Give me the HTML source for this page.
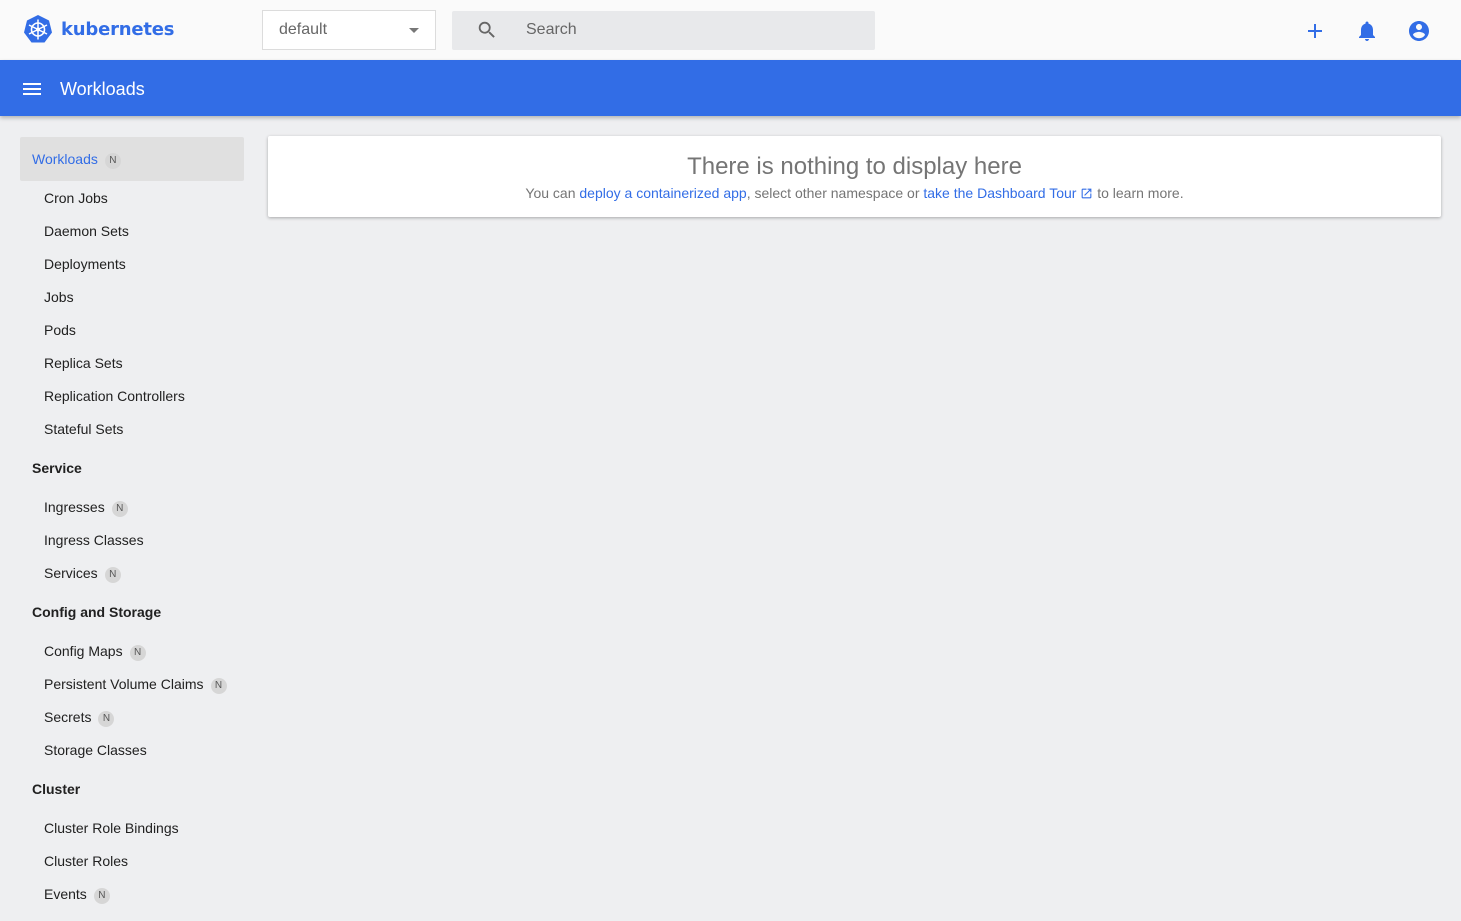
<!DOCTYPE html><html><head><style>
body{margin:0;width:1461px;height:921px;overflow:hidden;background:#eeeff1;font-family:"Liberation Sans",sans-serif;position:relative}
.a{position:absolute}
.top{left:0;top:0;width:1461px;height:60px;background:#fafafa}
.blue{left:0;top:60px;width:1461px;height:56px;background:#326de6;box-shadow:0 2px 4px rgba(0,0,0,.25)}
.it{position:absolute;left:44px;font-size:14px;color:#212121;line-height:20px}
.hd{position:absolute;left:32px;font-size:14px;font-weight:bold;color:#212121;line-height:20px}
.n{display:inline-block;width:16px;height:16px;border-radius:8px;background:#d6d6d6;color:#555;font-size:10px;text-align:center;line-height:16px;margin-left:7px;vertical-align:1px}
a{color:#326de6;text-decoration:none}
</style></head><body>
<div class="a top"></div>
<svg class="a" style="left:23px;top:14px" width="30" height="31" viewBox="0 0 30 31"><polygon points="15,1 26,6.5 29,18.5 21.5,28.5 8.5,28.5 1,18.5 4,6.5" fill="#326de6"/><circle cx="15" cy="15.5" r="6.5" fill="none" stroke="#fff" stroke-width="1.6"/><g stroke="#fff" stroke-width="1.5"><line x1="15" y1="5.5" x2="15" y2="25.5"/><line x1="6" y1="11" x2="24" y2="20"/><line x1="6" y1="20" x2="24" y2="11"/></g><circle cx="15" cy="15.5" r="2" fill="#fff"/></svg>
<div class="a" style="left:61px;top:19px;font-weight:bold;color:#326de6;font-family:'DejaVu Sans',sans-serif;font-size:18px;letter-spacing:-0.2px">kubernetes</div>
<div class="a" style="left:262px;top:10px;width:172px;height:38px;border:1px solid #dcdcdc;background:#fff"></div>
<div class="a" style="left:279px;top:21px;font-size:16px;color:#666">default</div>
<div class="a" style="left:409px;top:28px;width:0;height:0;border-left:5px solid transparent;border-right:5px solid transparent;border-top:5px solid #777"></div>
<div class="a" style="left:452px;top:11px;width:423px;height:39px;background:#e8e9eb;border-radius:2px"></div>
<svg class="a" style="left:476px;top:19px" width="22" height="22" viewBox="0 0 24 24"><path fill="#666" d="M15.5 14h-.79l-.28-.27A6.470 6.470 0 0016 9.5 6.5 6.5 0 109.5 16c1.61 0 3.09-.59 4.230-1.57l.27.28v.79l5 4.99L20.49 19l-4.99-5zm-6 0C7.01 14 5 11.99 5 9.5S7.01 5 9.5 5 14 7.01 14 9.5 11.99 14 9.5 14z"/></svg>
<div class="a" style="left:526px;top:21px;font-size:16px;color:#666">Search</div>
<svg class="a" style="left:1303px;top:19px" width="24" height="24" viewBox="0 0 24 24"><path fill="#326de6" d="M19 13h-6v6h-2v-6H5v-2h6V5h2v6h6v2z"/></svg>
<svg class="a" style="left:1355px;top:19px" width="24" height="24" viewBox="0 0 24 24"><path fill="#326de6" d="M12 22c1.1 0 2-.9 2-2h-4c0 1.1.89 2 2 2zm6-6v-5c0-3.07-1.64-5.640-4.5-6.32V4c0-.83-.67-1.5-1.5-1.5s-1.5.67-1.5 1.5v.68C7.63 5.36 6 7.92 6 11v5l-2 2v1h16v-1l-2-2z"/></svg>
<svg class="a" style="left:1407px;top:19px" width="24" height="24" viewBox="0 0 24 24"><path fill="#326de6" d="M12 2C6.48 2 2 6.48 2 12s4.48 10 10 10 10-4.48 10-10S17.52 2 12 2zm0 3c1.66 0 3 1.34 3 3s-1.34 3-3 3-3-1.34-3-3 1.34-3 3-3zm0 14.2a7.2 7.2 0 01-6-3.22c.03-1.99 4-3.080 6-3.08 1.99 0 5.97 1.09 6 3.08a7.2 7.2 0 01-6 3.22z"/></svg>
<div class="a blue"></div>
<svg class="a" style="left:20px;top:77px" width="24" height="24" viewBox="0 0 24 24"><path fill="#fff" d="M3 18h18v-2H3v2zm0-5h18v-2H3v2zm0-7v2h18V6H3z"/></svg>
<div class="a" style="left:60px;top:79px;font-size:18px;color:#fff">Workloads</div>
<div class="a" style="left:20px;top:137px;width:224px;height:44px;background:#e0e0e0;border-radius:2px"></div>
<div class="hd" style="top:149px;color:#326de6;font-weight:normal">Workloads<span class="n">N</span></div>
<div class="it" style="top:188px">Cron Jobs</div>
<div class="it" style="top:221px">Daemon Sets</div>
<div class="it" style="top:254px">Deployments</div>
<div class="it" style="top:287px">Jobs</div>
<div class="it" style="top:320px">Pods</div>
<div class="it" style="top:353px">Replica Sets</div>
<div class="it" style="top:386px">Replication Controllers</div>
<div class="it" style="top:419px">Stateful Sets</div>
<div class="hd" style="top:458px">Service</div>
<div class="it" style="top:497px">Ingresses<span class="n">N</span></div>
<div class="it" style="top:530px">Ingress Classes</div>
<div class="it" style="top:563px">Services<span class="n">N</span></div>
<div class="hd" style="top:602px">Config and Storage</div>
<div class="it" style="top:641px">Config Maps<span class="n">N</span></div>
<div class="it" style="top:674px">Persistent Volume Claims<span class="n">N</span></div>
<div class="it" style="top:707px">Secrets<span class="n">N</span></div>
<div class="it" style="top:740px">Storage Classes</div>
<div class="hd" style="top:779px">Cluster</div>
<div class="it" style="top:818px">Cluster Role Bindings</div>
<div class="it" style="top:851px">Cluster Roles</div>
<div class="it" style="top:884px">Events<span class="n">N</span></div>
<div class="a" style="left:268px;top:136px;width:1173px;height:81px;background:#fff;border-radius:2px;box-shadow:0 1px 3px rgba(0,0,0,.3)">
<div style="text-align:center;margin-top:16px;font-size:24px;color:#757575;line-height:30px">There is nothing to display here</div>
<div style="text-align:center;font-size:14px;color:#757575;line-height:20px;margin-top:1px">You can <a>deploy a containerized app</a>, select other namespace or <a>take the Dashboard Tour <svg width="13" height="13" viewBox="0 0 24 24" style="vertical-align:-2px"><path fill="#326de6" d="M19 19H5V5h7V3H5a2 2 0 00-2 2v14a2 2 0 002 2h14c1.1 0 2-.9 2-2v-7h-2v7zM14 3v2h3.59l-9.83 9.83 1.41 1.41L19 6.41V10h2V3h-7z"/></svg></a> to learn more.</div>
</div>
</body></html>
